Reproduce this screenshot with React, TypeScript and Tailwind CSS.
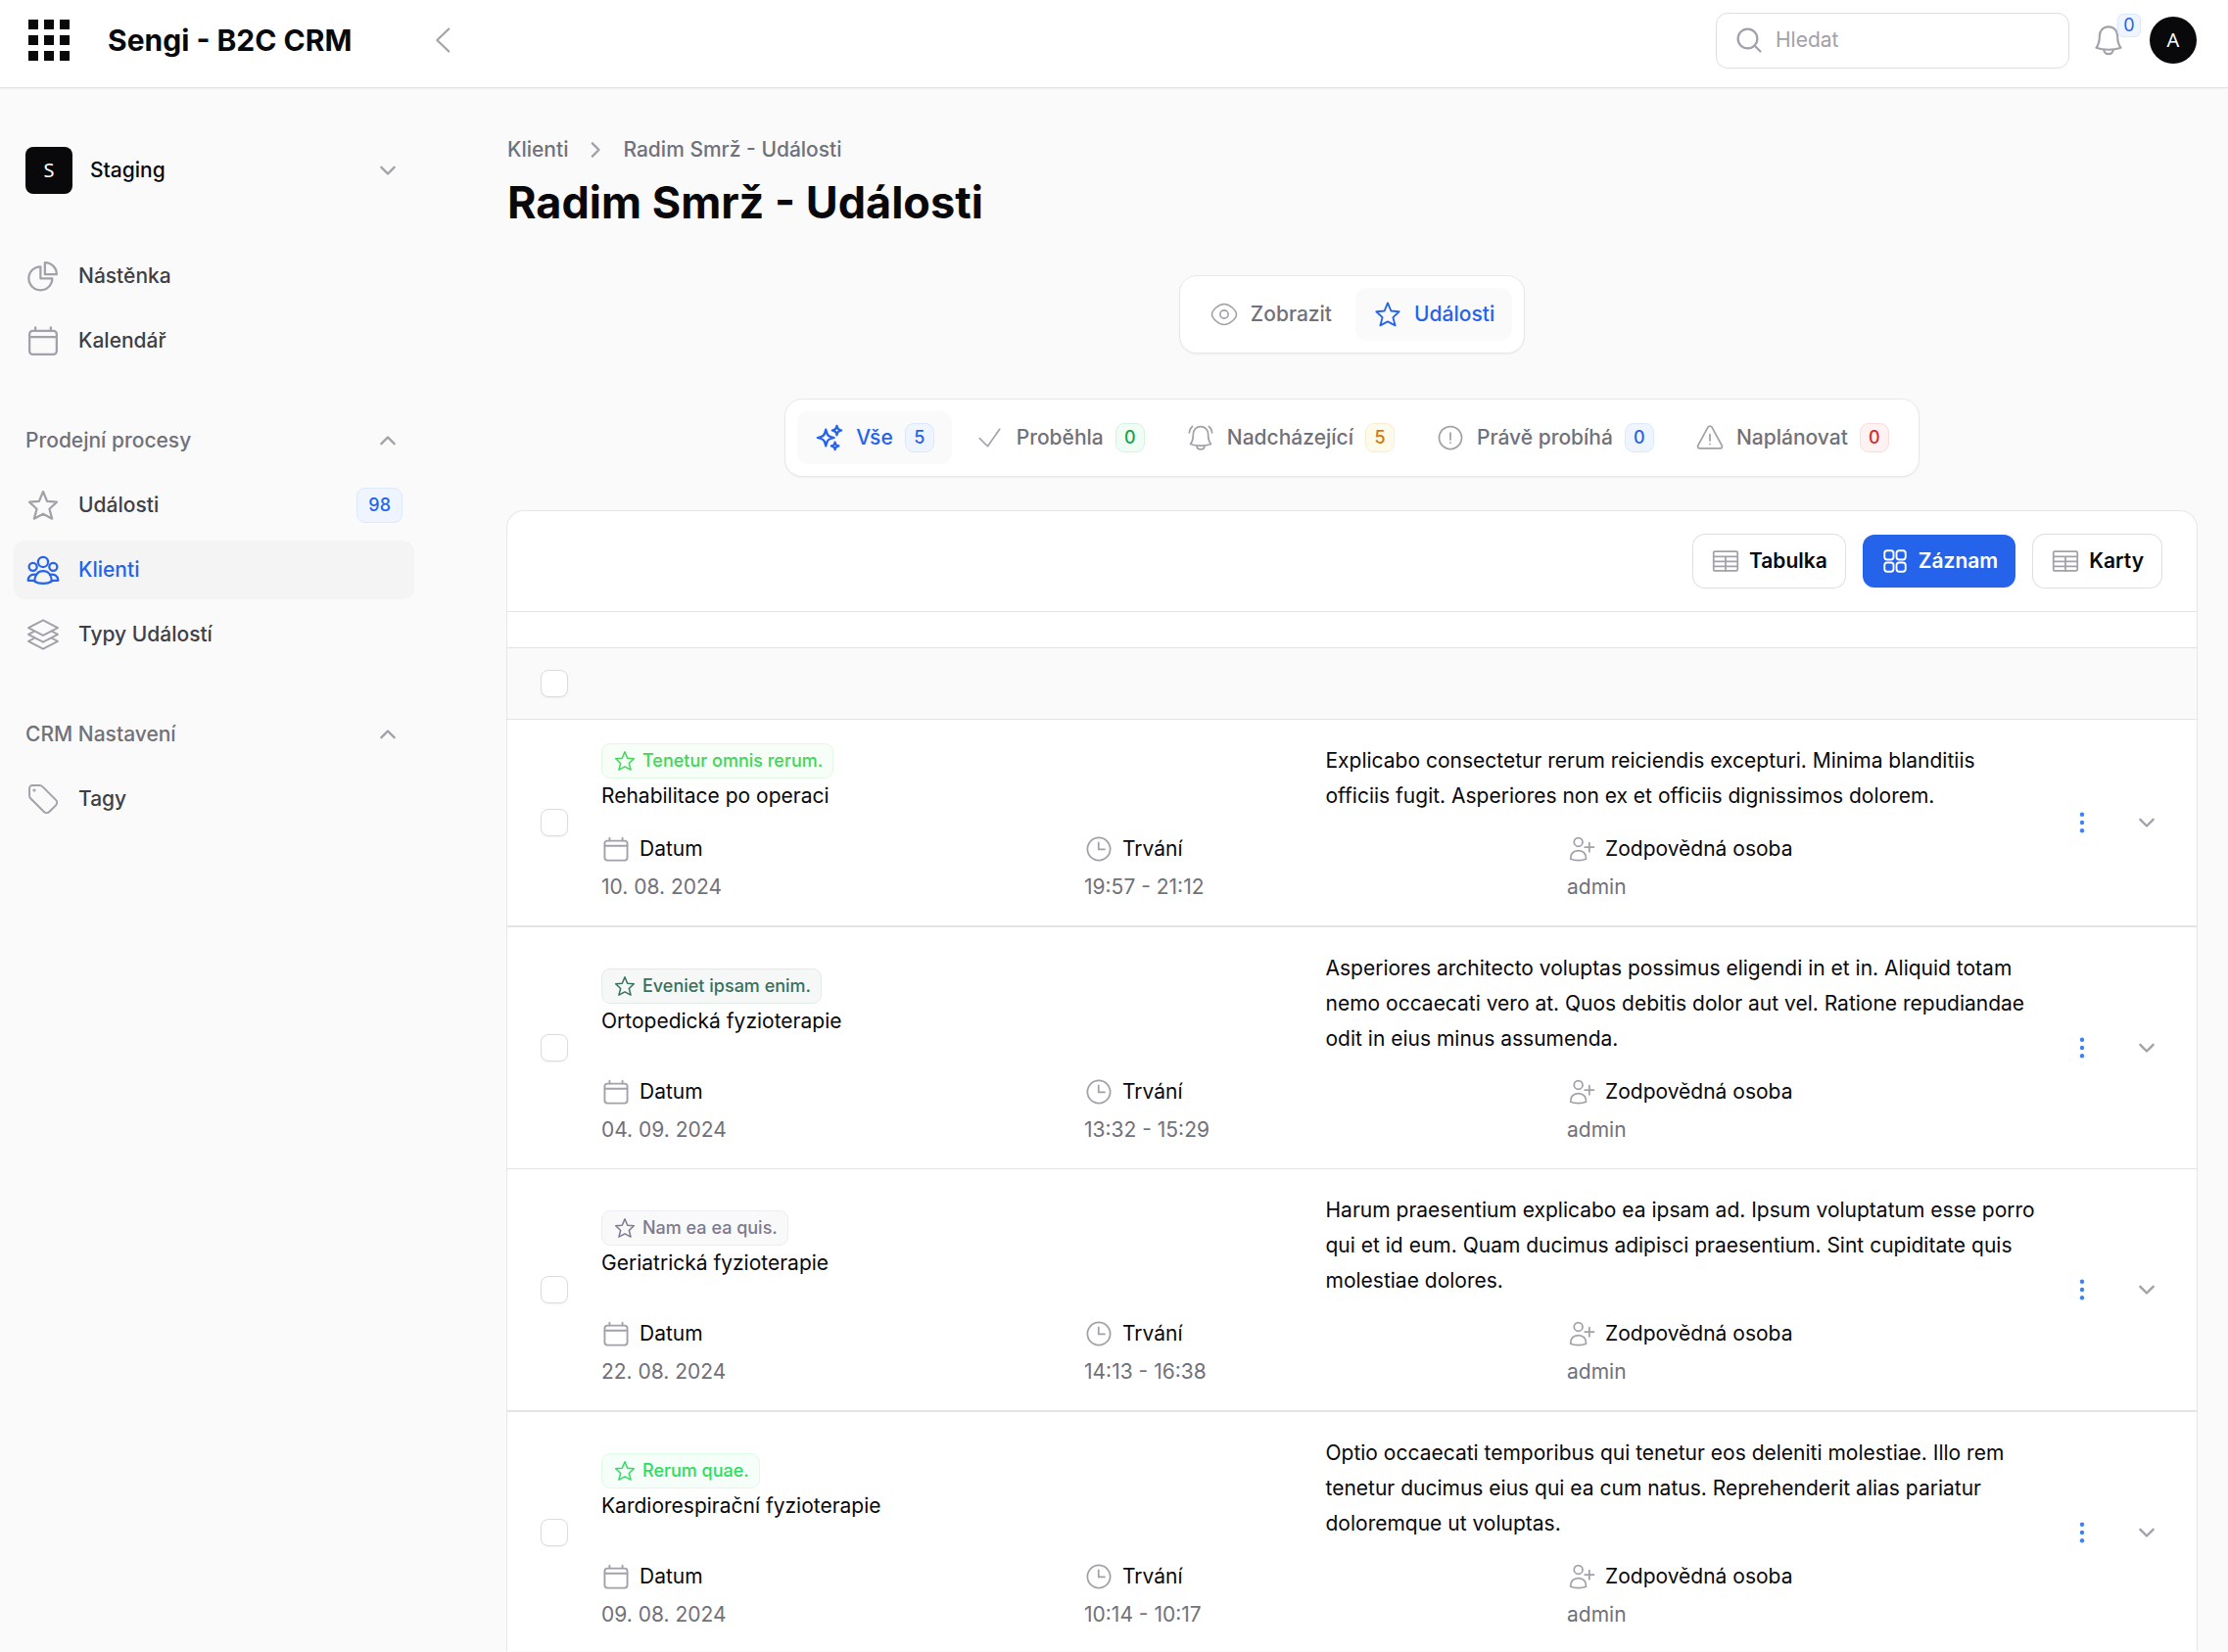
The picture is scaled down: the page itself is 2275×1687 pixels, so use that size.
import React from "react";

type IconProps = { className?: string };

function Svg({ className = "", width = 1.5, children }: IconProps & { width?: number; children: React.ReactNode }) {
  return (
    <svg
      viewBox="0 0 24 24"
      fill="none"
      stroke="currentColor"
      strokeWidth={width}
      strokeLinecap="round"
      strokeLinejoin="round"
      aria-hidden="true"
      className={`shrink-0 ${className}`}
    >
      {children}
    </svg>
  );
}

const PieIcon = (p: IconProps) => (
  <Svg {...p}>
    <path d="M10.25 5.5v8h8a8 8 0 1 1-8-8z" />
    <path d="M13.25 2.75v8h8a8 8 0 0 0-8-8z" />
  </Svg>
);
const CalendarIcon = (p: IconProps) => (
  <Svg {...p}>
    <rect x="2.75" y="5.25" width="18.5" height="16" rx="2.2" />
    <path d="M2.9 9.4h18.2M6.75 2.9v2.3M17.25 2.9v2.3" />
  </Svg>
);
const StarIcon = (p: IconProps) => (
  <Svg {...p}>
    <path d="M12 2.7l2.7 6.5 6.6.6-5 4.7 1.8 6.6-6.1-3.2-6.1 3.2 1.8-6.6-5-4.7 6.6-.6z" />
  </Svg>
);
const GroupIcon = (p: IconProps) => (
  <Svg {...p}>
    <circle cx="12" cy="6.6" r="3.4" />
    <circle cx="5.1" cy="9.9" r="2.7" />
    <circle cx="18.9" cy="9.9" r="2.7" />
    <path d="M6.2 19.8c0-4.2 2.2-7 5.8-7s5.8 2.8 5.8 7c-3 2-8.600 2-11.600 0z" />
    <path d="M7.400 15.200c-3-.7-5.600.9-5.600 4h4.300M16.600 15.200c3-.7 5.600.9 5.600 4h-4.300" />
  </Svg>
);
const LayersIcon = (p: IconProps) => (
  <Svg {...p} width={1.3}>
    <path d="M12 2.2l10 5.2-10 5.2L2 7.4z" />
    <path d="M6 9.8l-4 2.1 10 5.2 10-5.2-4-2.1" />
    <path d="M6 14.5l-4 2.1 10 5.2 10-5.2-4-2.1" />
  </Svg>
);
const TagIcon = (p: IconProps) => (
  <Svg {...p} width={1.3}>
    <path d="M2.7 4.7a2 2 0 0 1 2-2h4.9a3 3 0 0 1 2.1.9l9 9a2.6 2.6 0 0 1 0 3.6l-4.5 4.5a2.6 2.6 0 0 1-3.6 0l-9-9a3 3 0 0 1-.9-2.1z" />
    <circle cx="6" cy="6" r=".4" fill="currentColor" />
  </Svg>
);
const EyeIcon = (p: IconProps) => (
  <Svg {...p} width={1.3}>
    <path d="M12 3.6c4.6 0 10 5.2 10 8.4s-5.4 8.4-10 8.4S2 15.2 2 12 7.4 3.6 12 3.6z" />
    <circle cx="12" cy="12" r="3.3" />
  </Svg>
);
const SparklesIcon = (p: IconProps) => (
  <Svg {...p} width={1.8}>
    <path d="M9.813 15.904 9 18.75l-.813-2.846a4.5 4.5 0 0 0-3.09-3.09L2.25 12l2.846-.813a4.5 4.5 0 0 0 3.09-3.09L9 5.25l.813 2.846a4.5 4.5 0 0 0 3.09 3.09L15.75 12l-2.846.813a4.5 4.5 0 0 0-3.09 3.09Z" />
    <path d="M18.259 8.715 18 9.75l-.259-1.035a3.375 3.375 0 0 0-2.455-2.456L14.25 6l1.036-.259a3.375 3.375 0 0 0 2.455-2.456L18 2.25l.259 1.035a3.375 3.375 0 0 0 2.456 2.456L21.75 6l-1.035.259a3.375 3.375 0 0 0-2.456 2.456Z" />
    <path d="M16.894 20.567 16.5 21.75l-.394-1.183a2.25 2.25 0 0 0-1.423-1.423L13.5 18.75l1.183-.394a2.25 2.25 0 0 0 1.423-1.423l.394-1.183.394 1.183a2.25 2.25 0 0 0 1.423 1.423l1.183.394-1.183.394a2.25 2.25 0 0 0-1.423 1.423Z" />
  </Svg>
);
const CheckIcon = (p: IconProps) => (
  <Svg {...p} width={1.3}>
    <path d="M3.5 12.5 10 19 19.8 5" />
  </Svg>
);
const BellBody = () => (
  <>
    <path d="M12 2.9c-3.6 0-6.1 2.6-6.1 6.2 0 3.4-.4 5.7-2.3 8.1 2.5.9 5.3 1.3 8.4 1.3s5.9-.4 8.4-1.3c-1.9-2.4-2.3-4.7-2.3-8.1 0-3.6-2.5-6.2-6.1-6.2z" />
    <path d="M8.9 18.5c0 1.7 1.3 2.9 3.1 2.9s3.1-1.2 3.1-2.9" />
  </>
);
const BellIcon = (p: IconProps) => (
  <Svg {...p} width={1.4}>
    <BellBody />
  </Svg>
);
const BellAlertIcon = (p: IconProps) => (
  <Svg {...p} width={1.4}>
    <BellBody />
    <path d="M5.2 2.8C3.7 4.1 2.9 5.8 2.7 7.9M18.8 2.8c1.5 1.3 2.3 3 2.5 5.1" />
  </Svg>
);
const InfoIcon = (p: IconProps) => (
  <Svg {...p} width={1.4}>
    <circle cx="12" cy="12" r="9.2" />
    <path d="M12 8v5.5M12 16v.1" />
  </Svg>
);
const WarningIcon = (p: IconProps) => (
  <Svg {...p} width={1.4}>
    <path d="M10.4 3.3a1.9 1.9 0 0 1 3.2 0l8.2 15.2a1.5 1.5 0 0 1-1.3 2.2H3.5a1.5 1.5 0 0 1-1.3-2.2z" />
    <path d="M12 9.3v5M12 17v.1" />
  </Svg>
);
const TableIcon = (p: IconProps) => (
  <Svg {...p} width={1.4}>
    <rect x="2.2" y="4.1" width="19.6" height="15.8" rx="1" />
    <path d="M2.2 8.2h19.6M2.2 12.2h19.6M2.2 16.2h19.6M12 8.2v11.7" />
  </Svg>
);
const SquaresIcon = (p: IconProps) => (
  <Svg {...p}>
    <rect x="3.4" y="3.4" width="7.4" height="7.4" rx="2.2" />
    <rect x="13.2" y="3.4" width="7.4" height="7.4" rx="2.2" />
    <rect x="3.4" y="13.2" width="7.4" height="7.4" rx="2.2" />
    <rect x="13.2" y="13.2" width="7.4" height="7.4" rx="2.2" />
  </Svg>
);
const ClockIcon = (p: IconProps) => (
  <Svg {...p} width={1.4}>
    <circle cx="12" cy="12" r="9.3" />
    <path d="M11.8 6.7v5.5h5" />
  </Svg>
);
const UserPlusIcon = (p: IconProps) => (
  <Svg {...p} width={1.4}>
    <circle cx="9.3" cy="6.3" r="3.5" />
    <path d="M3 20.2c-.4-4.2 2.3-7 6.3-7s6.7 2.8 6.3 7c-3.4 1.5-9.2 1.5-12.6 0z" />
    <path d="M18.3 6.8v7.4M14.6 10.5H22" />
  </Svg>
);
const SearchIcon = (p: IconProps) => (
  <Svg {...p} width={1.8}>
    <circle cx="10.8" cy="10.8" r="7.9" />
    <path d="M16.8 16.8l4.4 4.4" />
  </Svg>
);
const ChevronDown = (p: IconProps) => (
  <Svg {...p} width={1.9}>
    <path d="M6.7 9.5l5.3 5.3 5.3-5.3" />
  </Svg>
);
const DotsIcon = ({ className = "" }: IconProps) => (
  <svg viewBox="0 0 30 30" fill="currentColor" aria-hidden="true" className={className}>
    <circle cx="15" cy="6.7" r="2.2" />
    <circle cx="15" cy="15" r="2.2" />
    <circle cx="15" cy="23.3" r="2.2" />
  </svg>
);

const tones = {
  blue: "border-[#dbe8fe] bg-[#eff5ff] text-[#2563eb]",
  green: "border-[#d6f3e0] bg-[#f0fdf5] text-[#16a34a]",
  amber: "border-[#faecd2] bg-[#fffbeb] text-[#d97706]",
  red: "border-[#fbdcdc] bg-[#fef2f2] text-[#dc2626]",
};

function NavItem({ icon: Icon, label, active, badge }: { icon: React.FC<IconProps>; label: string; active?: boolean; badge?: string }) {
  return (
    <li>
      <a
        href="#"
        aria-current={active ? "page" : undefined}
        className={`flex h-[60px] items-center gap-[18px] rounded-xl px-3 ${active ? "bg-[#f4f4f5] text-[#2563eb]" : "text-[#3f3f46]"}`}
      >
        <Icon className={`size-9 ${active ? "" : "text-[#a1a1aa]"}`} />
        <span className="flex-1">{label}</span>
        {badge && (
          <span className={`flex h-9 items-center rounded-[9px] border px-[11px] text-[18px] ${tones.blue}`}>{badge}</span>
        )}
      </a>
    </li>
  );
}

function NavGroup({ label, children }: { label: string; children: React.ReactNode }) {
  return (
    <section className="flex flex-col">
      <button type="button" className="flex h-[60px] items-center justify-between px-3 text-[#71717a]">
        {label}
        <ChevronDown className="size-[30px] rotate-180 text-[#a1a1aa]" />
      </button>
      <ul className="mt-1.5 flex flex-col gap-1.5">{children}</ul>
    </section>
  );
}

function Tab({ icon: Icon, label, active, count, tone }: { icon: React.FC<IconProps>; label: string; active?: boolean; count?: string; tone?: keyof typeof tones }) {
  return (
    <button
      type="button"
      role="tab"
      aria-selected={!!active}
      className={`flex h-[54px] items-center gap-3 rounded-xl px-[18px] font-medium ${active ? "bg-[#fafafa] text-[#2563eb]" : "text-[#71717a]"}`}
    >
      <Icon className={`size-[30px] ${active ? "" : "text-[#a1a1aa]"}`} />
      {label}
      {count && tone && (
        <span className={`flex h-[30px] min-w-[30px] items-center justify-center rounded-[9px] border text-[18px] ${tones[tone]}`}>{count}</span>
      )}
    </button>
  );
}

function TabBar({ label, children }: { label: string; children: React.ReactNode }) {
  return (
    <div role="tablist" aria-label={label} className="flex gap-1.5 rounded-[18px] border border-[#e8e8e9] bg-white p-3 shadow-xs">
      {children}
    </div>
  );
}

function Checkbox({ label }: { label: string }) {
  return (
    <input
      type="checkbox"
      aria-label={label}
      className="size-7 shrink-0 appearance-none rounded-lg border border-[#dcdcde] bg-white shadow-xs checked:bg-[#2563eb]"
    />
  );
}

function ViewButton({ icon: Icon, label, primary }: { icon: React.FC<IconProps>; label: string; primary?: boolean }) {
  return (
    <button
      type="button"
      className={`flex h-[54px] items-center gap-[9px] rounded-xl px-[18px] font-semibold ${
        primary ? "bg-[#2563eb] text-white" : "text-[#09090b] ring-1 ring-[#dfdfe1]"
      }`}
    >
      <Icon className={`size-[30px] ${primary ? "" : "text-[#a1a1aa]"}`} />
      {label}
    </button>
  );
}

function Field({ icon: Icon, label, value }: { icon: React.FC<IconProps>; label: string; value: string }) {
  return (
    <div>
      <dt className="flex h-9 items-center gap-[9px]">
        <Icon className="size-[30px] text-[#a1a1aa]" />
        {label}
      </dt>
      <dd className="mt-1.5 leading-[30px] text-[#71717a]">{value}</dd>
    </div>
  );
}

type Event = { tag: string; tone: string; title: string; text: string; date: string; time: string; line: string };

const events: Event[] = [
  {
    tag: "Tenetur omnis rerum.",
    tone: "border-[#e0fae4] bg-[#f6fef7] text-[#41d658]",
    title: "Rehabilitace po operaci",
    text: "Explicabo consectetur rerum reiciendis excepturi. Minima blanditiis officiis fugit. Asperiores non ex et officiis dignissimos dolorem.",
    date: "10. 08. 2024",
    time: "19:57 - 21:12",
    line: "border-b-2 pb-6",
  },
  {
    tag: "Eveniet ipsam enim.",
    tone: "border-[#e3ebe9] bg-[#f5f8f7] text-[#37705f]",
    title: "Ortopedická fyzioterapie",
    text: "Asperiores architecto voluptas possimus eligendi in et in. Aliquid totam nemo occaecati vero at. Quos debitis dolor aut vel. Ratione repudiandae odit in eius minus assumenda.",
    date: "04. 09. 2024",
    time: "13:32 - 15:29",
    line: "border-b pb-6",
  },
  {
    tag: "Nam ea ea quis.",
    tone: "border-[#ececf0] bg-[#f9f9fa] text-[#7d7990]",
    title: "Geriatrická fyzioterapie",
    text: "Harum praesentium explicabo ea ipsam ad. Ipsum voluptatum esse porro qui et id eum. Quam ducimus adipisci praesentium. Sint cupiditate quis molestiae dolores.",
    date: "22. 08. 2024",
    time: "14:13 - 16:38",
    line: "border-b-2 pb-6",
  },
  {
    tag: "Rerum quae.",
    tone: "border-[#dcfce6] bg-[#f5fef8] text-[#2fdc62]",
    title: "Kardiorespirační fyzioterapie",
    text: "Optio occaecati temporibus qui tenetur eos deleniti molestiae. Illo rem tenetur ducimus eius qui ea cum natus. Reprehenderit alias pariatur doloremque ut voluptas.",
    date: "09. 08. 2024",
    time: "10:14 - 10:17",
    line: "pb-[22px]",
  },
];

function EventRow({ event }: { event: Event }) {
  return (
    <li className={`flex items-center border-[#e4e4e6] pt-6 pr-6 pl-[34px] ${event.line}`}>
      <Checkbox label={`Vybrat ${event.title}`} />
      <div className="ml-[34px] flex-1">
        <div className="grid grid-cols-2 items-center">
          <div className="flex flex-col items-start">
            <span className={`flex h-9 items-center gap-1.5 rounded-[9px] border pr-2.5 pl-[11px] text-[18px] font-medium ${event.tone}`}>
              <StarIcon className="size-6" />
              {event.tag}
            </span>
            <h2 className="leading-9">{event.title}</h2>
          </div>
          <p className="pr-[14px] leading-9">{event.text}</p>
        </div>
        <dl className="mt-[18px] grid grid-cols-3">
          <Field icon={CalendarIcon} label="Datum" value={event.date} />
          <Field icon={ClockIcon} label="Trvání" value={event.time} />
          <Field icon={UserPlusIcon} label="Zodpovědná osoba" value="admin" />
        </dl>
      </div>
      <button type="button" aria-label="Akce" className="ml-1.5 flex size-[54px] items-center justify-center text-[#3b82f6]">
        <DotsIcon className="size-[30px]" />
      </button>
      <button type="button" aria-label="Rozbalit" className="ml-3 flex size-[54px] items-center justify-center text-[#a1a1aa]">
        <ChevronDown className="size-[30px]" />
      </button>
    </li>
  );
}

const squares = [0, 1, 2, 3, 4, 5, 6, 7, 8];

export default function App() {
  return (
    <div className="flex min-h-screen flex-col bg-[#fafafa] font-['Inter',sans-serif] text-[21px] leading-[30px] text-[#09090b]">
      <header className="flex h-[90px] items-center border-b border-[#e4e4e5] bg-white pr-8 pb-[7px] pl-[26px] shadow-xs">
        <button type="button" aria-label="Aplikace" className="grid size-12 grid-cols-3 place-items-center">
          {squares.map((n) => (
            <span key={n} className="size-[10px] bg-[#09090b]" />
          ))}
        </button>
        <div className="ml-9 flex w-[360px] items-center justify-between">
          <a href="#" className="text-[30px] leading-9 font-bold">
            Sengi - B2C CRM
          </a>
          <button type="button" aria-label="Sbalit menu" className="text-[#a1a1aa]">
            <Svg className="size-9" width={1.4}>
              <path d="M16.2 4.3 8.2 12l8 7.7" />
            </Svg>
          </button>
        </div>
        <label className="ml-auto flex h-[57px] w-[361px] items-center gap-3 rounded-xl border border-[#dedee0] px-[18px]">
          <SearchIcon className="size-[30px] text-[#a1a1aa]" />
          <input type="search" aria-label="Hledat" placeholder="Hledat" className="w-full min-w-0 bg-transparent outline-none placeholder:text-[#a1a1aa]" />
        </label>
        <button type="button" aria-label="Oznámení" className="relative ml-[22px] text-[#a1a1aa]">
          <BellIcon className="size-9" />
          <span className={`absolute -top-[9px] -right-[15px] flex size-6 items-center justify-center rounded-md border text-[18px] ${tones.blue}`}>0</span>
        </button>
        <button type="button" aria-label="Účet" className="ml-6 flex size-12 items-center justify-center rounded-full bg-[#09090b] font-['Noto_Sans',sans-serif] text-[20px] text-white">
          A
        </button>
      </header>

      <div className="flex flex-1">
        <aside className="w-[480px] shrink-0 pt-[60px] pr-[57px] pl-[14px]">
          <button type="button" className="flex h-12 w-full items-center px-3 font-medium">
            <span className="mr-[18px] flex size-12 items-center justify-center rounded-lg bg-[#09090b] font-['Noto_Sans',sans-serif] text-[20px] font-normal text-white">S</span>
            Staging
            <ChevronDown className="ml-auto size-[30px] text-[#a1a1aa]" />
          </button>
          <nav aria-label="Hlavní" className="mt-[54px] flex flex-col gap-[42px] font-medium">
            <ul className="flex flex-col gap-1.5">
              <NavItem icon={PieIcon} label="Nástěnka" />
              <NavItem icon={CalendarIcon} label="Kalendář" />
            </ul>
            <NavGroup label="Prodejní procesy">
              <NavItem icon={StarIcon} label="Události" badge="98" />
              <NavItem icon={GroupIcon} label="Klienti" active />
              <NavItem icon={LayersIcon} label="Typy Událostí" />
            </NavGroup>
            <NavGroup label="CRM Nastavení">
              <NavItem icon={TagIcon} label="Tagy" />
            </NavGroup>
          </nav>
        </aside>

        <main className="min-w-0 flex-1 pt-12 pr-8 pl-[38px]">
          <nav aria-label="Drobečková navigace" className="flex items-center gap-[13px] font-medium text-[#71717a]">
            <a href="#">Klienti</a>
            <ChevronDown className="size-[30px] -rotate-90 text-[#a1a1aa]" />
            <a href="#">Radim Smrž - Události</a>
          </nav>
          <h1 className="mt-3 text-[45px] leading-[54px] font-bold">Radim Smrž - Události</h1>

          <div className="mt-[47px] flex flex-col items-center gap-[46px]">
            <TabBar label="Stránky záznamu">
              <Tab icon={EyeIcon} label="Zobrazit" />
              <Tab icon={StarIcon} label="Události" active />
            </TabBar>
            <TabBar label="Stav událostí">
              <Tab icon={SparklesIcon} label="Vše" count="5" tone="blue" active />
              <Tab icon={CheckIcon} label="Proběhla" count="0" tone="green" />
              <Tab icon={BellAlertIcon} label="Nadcházející" count="5" tone="amber" />
              <Tab icon={InfoIcon} label="Právě probíhá" count="0" tone="blue" />
              <Tab icon={WarningIcon} label="Naplánovat" count="0" tone="red" />
            </TabBar>
          </div>

          <section className="-mx-px mt-[34px] rounded-t-[18px] border-x border-t border-[#e6e6e7] bg-white">
            <div className="flex justify-end gap-[18px] border-b border-[#e4e4e6] px-9 py-6">
              <ViewButton icon={TableIcon} label="Tabulka" />
              <ViewButton icon={SquaresIcon} label="Záznam" primary />
              <ViewButton icon={TableIcon} label="Karty" />
            </div>
            <div className="h-9" />
            <div className="flex h-[74px] items-center border-y border-[#e4e4e6] bg-[#fafafa] pl-[34px]">
              <Checkbox label="Vybrat vše" />
            </div>
            <ul>
              {events.map((event) => (
                <EventRow key={event.title} event={event} />
              ))}
            </ul>
          </section>
        </main>
      </div>
    </div>
  );
}
